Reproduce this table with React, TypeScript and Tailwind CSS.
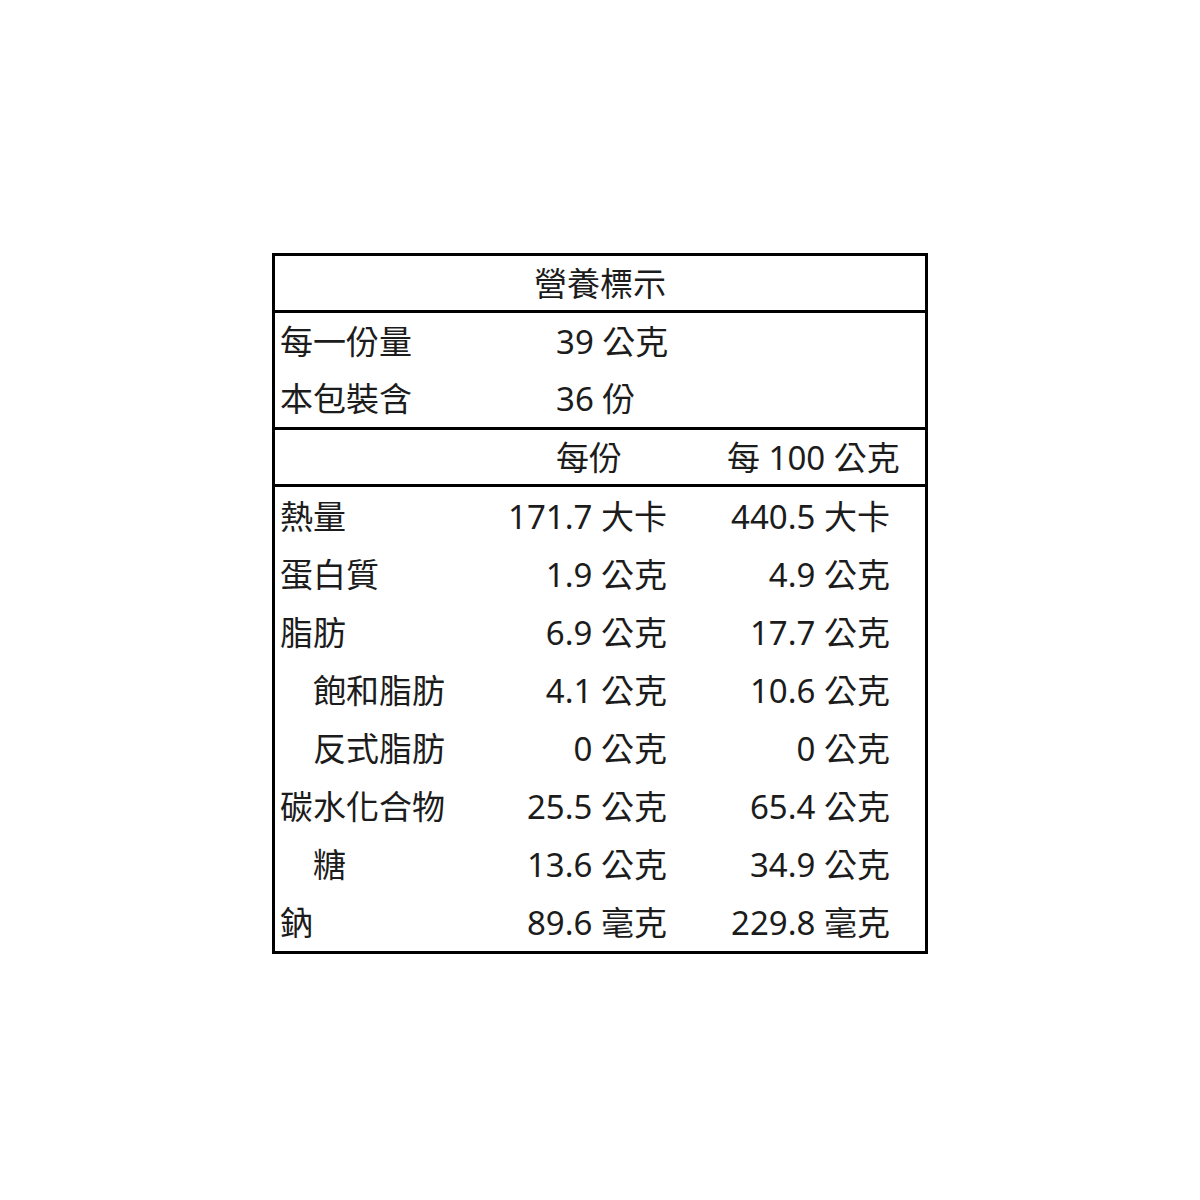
import React from "react";

type Row = { label: string; indent?: boolean; perServing: string; per100: string };

const rows: Row[] = [
  { label: "熱量", perServing: "171.7 大卡", per100: "440.5 大卡" },
  { label: "蛋白質", perServing: "1.9 公克", per100: "4.9 公克" },
  { label: "脂肪", perServing: "6.9 公克", per100: "17.7 公克" },
  { label: "飽和脂肪", indent: true, perServing: "4.1 公克", per100: "10.6 公克" },
  { label: "反式脂肪", indent: true, perServing: "0 公克", per100: "0 公克" },
  { label: "碳水化合物", perServing: "25.5 公克", per100: "65.4 公克" },
  { label: "糖", indent: true, perServing: "13.6 公克", per100: "34.9 公克" },
  { label: "鈉", perServing: "89.6 毫克", per100: "229.8 毫克" },
];

export default function App() {
  return (
    <div className="min-h-[1200px] w-[1200px] bg-white pt-[253px] pl-[272px] font-['Noto_Sans','Noto_Sans_CJK_TC',sans-serif] text-[33px] leading-none text-[#1c1c1c]">
      <div className="w-[656px] border-[3px] border-black">
        {/* Title */}
        <div className="flex h-[57px] items-center justify-center border-b-[3px] border-black">
          營養標示
        </div>

        {/* Serving info */}
        <div className="border-b-[3px] border-black">
          <div className="grid h-[57px] grid-cols-[281px_1fr] items-center">
            <span className="pl-[5px]">每一份量</span>
            <span>39 公克</span>
          </div>
          <div className="grid h-[57px] grid-cols-[281px_1fr] items-center">
            <span className="pl-[5px]">本包裝含</span>
            <span>36 份</span>
          </div>
        </div>

        {/* Column header */}
        <div className="grid h-[57px] grid-cols-[281px_171px_1fr] items-center border-b-[3px] border-black">
          <span />
          <span>每份</span>
          <span>每 100 公克</span>
        </div>

        {/* Nutrients */}
        <div className="pr-[35px]">
          {rows.map((r) => (
            <div key={r.label} className="grid h-[58px] grid-cols-[195px_197px_223px] items-center">
              <span className={r.indent ? "pl-[38px]" : "pl-[5px]"}>{r.label}</span>
              <span className="text-right">{r.perServing}</span>
              <span className="text-right">{r.per100}</span>
            </div>
          ))}
        </div>
      </div>
    </div>
  );
}
